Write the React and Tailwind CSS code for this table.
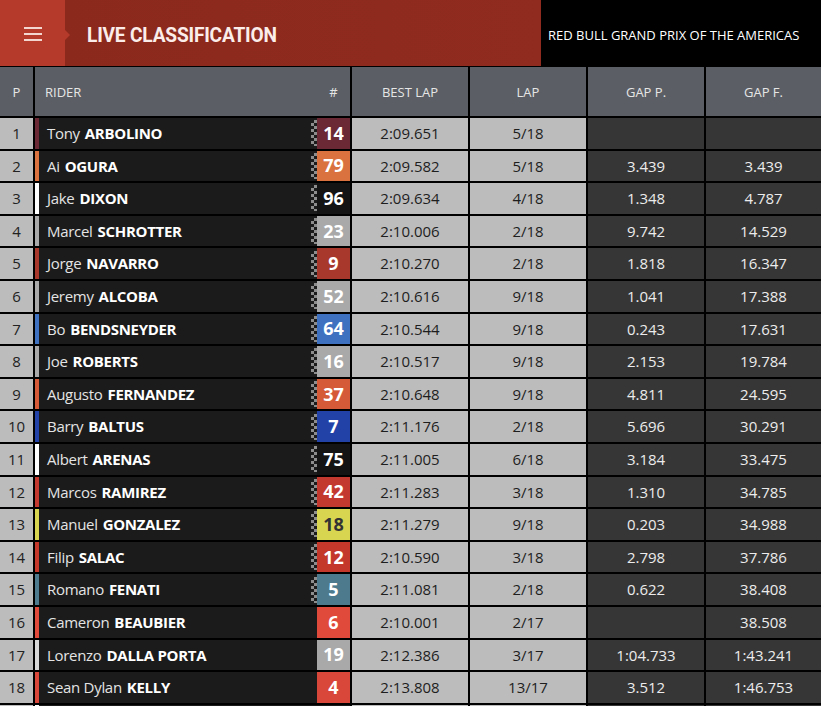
import React from "react";

const rows = [
  [1, "Tony", "ARBOLINO", "14", "#6b2835", "#6b2835", "2:09.651", "5/18", "", "", true, false],
  [2, "Ai", "OGURA", "79", "#d9723f", "#d9723f", "2:09.582", "5/18", "3.439", "3.439", true, false],
  [3, "Jake", "DIXON", "96", "#141414", "#ffffff", "2:09.634", "4/18", "1.348", "4.787", true, false],
  [4, "Marcel", "SCHROTTER", "23", "#a9a9a9", "#a9a9a9", "2:10.006", "2/18", "9.742", "14.529", true, false],
  [5, "Jorge", "NAVARRO", "9", "#a8382c", "#a8382c", "2:10.270", "2/18", "1.818", "16.347", true, false],
  [6, "Jeremy", "ALCOBA", "52", "#a9a9a9", "#a9a9a9", "2:10.616", "9/18", "1.041", "17.388", true, false],
  [7, "Bo", "BENDSNEYDER", "64", "#3e72c0", "#3e72c0", "2:10.544", "9/18", "0.243", "17.631", true, false],
  [8, "Joe", "ROBERTS", "16", "#a9a9a9", "#a9a9a9", "2:10.517", "9/18", "2.153", "19.784", true, false],
  [9, "Augusto", "FERNANDEZ", "37", "#d45a38", "#d45a38", "2:10.648", "9/18", "4.811", "24.595", true, false],
  [10, "Barry", "BALTUS", "7", "#2242a8", "#2242a8", "2:11.176", "2/18", "5.696", "30.291", true, false],
  [11, "Albert", "ARENAS", "75", "#141414", "#ffffff", "2:11.005", "6/18", "3.184", "33.475", true, false],
  [12, "Marcos", "RAMIREZ", "42", "#c4392f", "#c4392f", "2:11.283", "3/18", "1.310", "34.785", true, false],
  [13, "Manuel", "GONZALEZ", "18", "#d8d650", "#d8d650", "2:11.279", "9/18", "0.203", "34.988", true, true],
  [14, "Filip", "SALAC", "12", "#c3382b", "#c3382b", "2:10.590", "3/18", "2.798", "37.786", true, false],
  [15, "Romano", "FENATI", "5", "#4d7b8d", "#4d7b8d", "2:11.081", "2/18", "0.622", "38.408", true, false],
  [16, "Cameron", "BEAUBIER", "6", "#df4a3a", "#df4a3a", "2:10.001", "2/17", "", "38.508", false, false],
  [17, "Lorenzo", "DALLA PORTA", "19", "#a9a9a9", "#d8d8d8", "2:12.386", "3/17", "1:04.733", "1:43.241", false, false],
  [18, "Sean Dylan", "KELLY", "4", "#d8473a", "#d8473a", "2:13.808", "13/17", "3.512", "1:46.753", false, false],
  [19, "", "", "", "#1b1b1b", "#ffffff", "", "", "", "", false, false],
];

const grid = "grid grid-cols-[33px_315px_116px_116px_116px_115px] gap-x-[2px]";

export default function App() {
  return (
    <div className="w-[821px] h-[706px] overflow-hidden bg-black font-['Open_Sans',sans-serif]">
      {/* Top bar */}
      <div className="flex h-[66px]">
        <div className="relative w-[65px] bg-[#b63a2b] flex items-center justify-center pt-[2px]">
          <div className="flex flex-col gap-[4px]">
            <div className="w-[18px] h-[2px] bg-[#f3d6cf]" />
            <div className="w-[18px] h-[2px] bg-[#f3d6cf]" />
            <div className="w-[18px] h-[2px] bg-[#f3d6cf]" />
          </div>
          <div className="absolute left-[65px] top-[30px] w-0 h-0 border-y-[5px] border-y-transparent border-l-[5px] border-l-[#b63a2b]" />
        </div>
        <div className="w-[476px] bg-[linear-gradient(90deg,#8c291d,#8f2b1f)] flex items-center pl-[22px] pt-[6px]">
          <span className="origin-left scale-x-[0.91] inline-block text-[21px] font-bold text-[#fbeeea] font-['Roboto',sans-serif] tracking-[-0.2px] whitespace-nowrap">
            LIVE CLASSIFICATION
          </span>
        </div>
        <div className="flex-1 flex items-center pl-[7px] pt-[6px]">
          <span className="text-[13px] text-white whitespace-nowrap">
            RED BULL GRAND PRIX OF THE AMERICAS
          </span>
        </div>
      </div>

      {/* Column header */}
      <div className={`${grid} mt-[1px] h-[49px] text-[13px] text-[#e6e6e6]`}>
        <div className="bg-[#5b5e64] flex items-center justify-center pt-[3px]">P</div>
        <div className="bg-[#5b5e64] flex items-center pl-[10px] pt-[3px]">
          <span className="flex-1">RIDER</span>
          <span className="w-[33px] text-center">#</span>
        </div>
        <div className="bg-[#5b5e64] flex items-center justify-center pt-[3px]">BEST LAP</div>
        <div className="bg-[#5b5e64] flex items-center justify-center pt-[3px]">LAP</div>
        <div className="bg-[#5b5e64] flex items-center justify-center pt-[3px]">GAP P.</div>
        <div className="bg-[#5b5e64] flex items-center justify-center pt-[3px]">GAP F.</div>
      </div>

      {/* Rows */}
      <div className="flex flex-col gap-y-[2px] mt-[2px]">
        {rows.map((r) => {
          const [pos, first, last, num, color, stripe, best, lap, gp, gf, flag, darkText] = r;
          return (
            <div key={pos} className={`${grid} h-[30.6px] shrink-0 text-[15px]`}>
              <div className="bg-[#bcbcbc] flex items-center justify-center text-[#222]">
                {first ? pos : ""}
              </div>
              <div className="flex bg-[#1b1b1b]">
                <div className="w-[4px]" style={{ backgroundColor: stripe }} />
                <div className="flex-1 flex items-center pl-[8px] whitespace-nowrap text-[#e4e4e4] tracking-[-0.3px]">
                  {first && (
                    <>
                      <span>{first}</span>
                      <span className="ml-[5px] font-bold text-white">{last}</span>
                    </>
                  )}
                </div>
                <div className="w-[6px] flex items-center">
                  {flag && (
                    <div className="w-[6px] h-[26px] bg-[repeating-conic-gradient(#8d8d8d_0%_25%,#1b1b1b_0%_50%)] bg-[length:6px_6px]" />
                  )}
                </div>
                <div
                  className={`w-[33px] flex items-center justify-center font-bold text-[18px] ${darkText ? "text-[#333]" : "text-white"}`}
                  style={{ backgroundColor: color }}
                >
                  {num}
                </div>
              </div>
              <div className="bg-[#bcbcbc] flex items-center justify-center text-[#1e1e1e]">{best}</div>
              <div className="bg-[#bcbcbc] flex items-center justify-center text-[#1e1e1e]">{lap}</div>
              <div className="bg-[#363636] flex items-center justify-center text-[#ececec]">{gp}</div>
              <div className="bg-[#363636] flex items-center justify-center text-[#ececec]">{gf}</div>
            </div>
          );
        })}
      </div>
    </div>
  );
}
